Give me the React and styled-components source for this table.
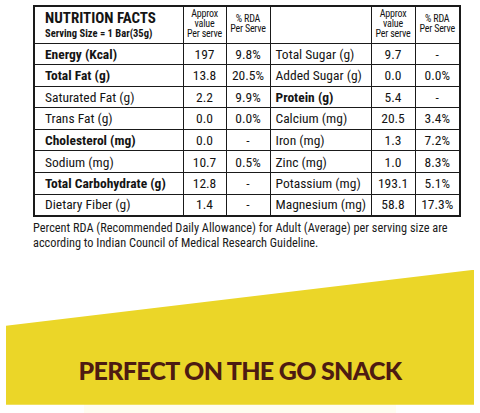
import React from "react";
import styled, { createGlobalStyle } from "styled-components";

const Global = createGlobalStyle`
  html, body { margin: 0; padding: 0; background: #fff; }
  body { font-family: "Roboto Condensed", Roboto, "Liberation Sans", sans-serif; color: #141414; }
`;

const Page = styled.div`
  width: 480px;
  height: 413px;
  overflow: hidden;
  display: flex;
  flex-direction: column;
  align-items: center;
`;

const Facts = styled.div`
  width: 426px;
  margin-top: 5px;
  margin-left: 12px;
`;

const Table = styled.table`
  width: 426px;
  border-collapse: collapse;
  border: 2px solid #1a1a1a;
  table-layout: fixed;
  font-family: Roboto, "Liberation Sans", sans-serif;
  font-stretch: condensed;
`;

const HeadRow = styled.tr`
  height: 37px;
`;

const Row = styled.tr`
  height: 21.6px;
`;

const Cell = styled.td`
  border: 1.5px solid #1a1a1a;
  padding: 1px 0 0 ${(p) => p.$pad || 0}px;
  text-align: ${(p) => (p.$center ? "center" : "left")};
  font-size: 13.5px;
  font-weight: ${(p) => (p.$bold ? 700 : 400)};
  white-space: nowrap;
  line-height: 1;
  vertical-align: middle;
`;

const HeadCell = styled.td`
  border: 1.5px solid #1a1a1a;
  text-align: center;
  font-size: 10px;
  letter-spacing: -0.2px;
  line-height: 10px;
  vertical-align: top;
  white-space: nowrap;
  overflow: hidden;
  padding: ${(p) => (p.$two ? 7 : 2)}px 0 0;
`;

const TitleCell = styled.td`
  border: 1.5px solid #1a1a1a;
  padding: 2px 0 0 10px;
  vertical-align: top;
`;

const Title = styled.div`
  font-size: 15px;
  font-weight: 700;
  line-height: 18px;
`;

const Serving = styled.div`
  font-size: 10.5px;
  font-weight: 700;
  line-height: 14px;
`;

const Note = styled.p`
  margin: 4px 0 0;
  font-family: Roboto, "Liberation Sans", sans-serif;
  font-stretch: condensed;
  font-size: 12.3px;
  line-height: 15px;
  color: #1a1a1a;
`;

const Banner = styled.section`
  width: 468px;
  height: 141px;
  margin-top: 19px;
  background: #ebd628;
  clip-path: polygon(0 56px, 100% 0, 100% 100%, 0 100%);
  display: flex;
  align-items: flex-end;
  justify-content: center;
  padding-bottom: 22px;
  box-sizing: border-box;
`;

const Heading = styled.h2`
  margin: 0;
  font-family: Lato, "Open Sans", sans-serif;
  font-weight: 900;
  font-size: 25px;
  letter-spacing: -0.7px;
  color: #4d1b12;
  line-height: 1;
`;

const Card = styled.div`
  width: 312px;
  height: 12px;
  margin-top: -3px;
  background: #fffdf0;
`;

const left = [
  ["Energy (Kcal)", true, "197", "9.8%"],
  ["Total Fat (g)", true, "13.8", "20.5%"],
  ["Saturated Fat (g)", false, "2.2", "9.9%"],
  ["Trans Fat (g)", false, "0.0", "0.0%"],
  ["Cholesterol (mg)", true, "0.0", "-"],
  ["Sodium (mg)", false, "10.7", "0.5%"],
  ["Total Carbohydrate (g)", true, "12.8", "-"],
  ["Dietary Fiber (g)", false, "1.4", "-"],
];

const right = [
  ["Total Sugar (g)", false, "9.7", "-"],
  ["Added Sugar (g)", false, "0.0", "0.0%"],
  ["Protein (g)", true, "5.4", "-"],
  ["Calcium (mg)", false, "20.5", "3.4%"],
  ["Iron (mg)", false, "1.3", "7.2%"],
  ["Zinc (mg)", false, "1.0", "8.3%"],
  ["Potassium (mg)", false, "193.1", "5.1%"],
  ["Magnesium (mg)", false, "58.8", "17.3%"],
];

const Col = styled.col`
  width: ${(p) => p.$w}px;
`;

export default function App() {
  return (
    <>
      <Global />
      <Page>
        <Facts>
          <Table>
            <colgroup>
              <Col $w={149} />
              <Col $w={43} />
              <Col $w={44} />
              <Col $w={101} />
              <Col $w={44} />
              <Col $w={45} />
            </colgroup>
            <tbody>
              <HeadRow>
                <TitleCell>
                  <Title>NUTRITION FACTS</Title>
                  <Serving>Serving Size = 1 Bar(35g)</Serving>
                </TitleCell>
                <HeadCell>Approx<br />value<br />Per serve</HeadCell>
                <HeadCell $two>% RDA<br />Per Serve</HeadCell>
                <HeadCell />
                <HeadCell>Approx<br />value<br />Per serve</HeadCell>
                <HeadCell $two>% RDA<br />Per Serve</HeadCell>
              </HeadRow>
              {left.map((l, i) => {
                const r = right[i];
                return (
                  <Row key={l[0]}>
                    <Cell $pad={10} $bold={l[1]}>{l[0]}</Cell>
                    <Cell $center>{l[2]}</Cell>
                    <Cell $center>{l[3]}</Cell>
                    <Cell $pad={5} $bold={r[1]}>{r[0]}</Cell>
                    <Cell $center>{r[2]}</Cell>
                    <Cell $center>{r[3]}</Cell>
                  </Row>
                );
              })}
            </tbody>
          </Table>
          <Note>
            Percent RDA (Recommended Daily Allowance) for Adult (Average) per serving size are according to Indian Council of Medical Research Guideline.
          </Note>
        </Facts>
        <Banner>
          <Heading>PERFECT ON THE GO SNACK</Heading>
        </Banner>
        <Card />
      </Page>
    </>
  );
}
